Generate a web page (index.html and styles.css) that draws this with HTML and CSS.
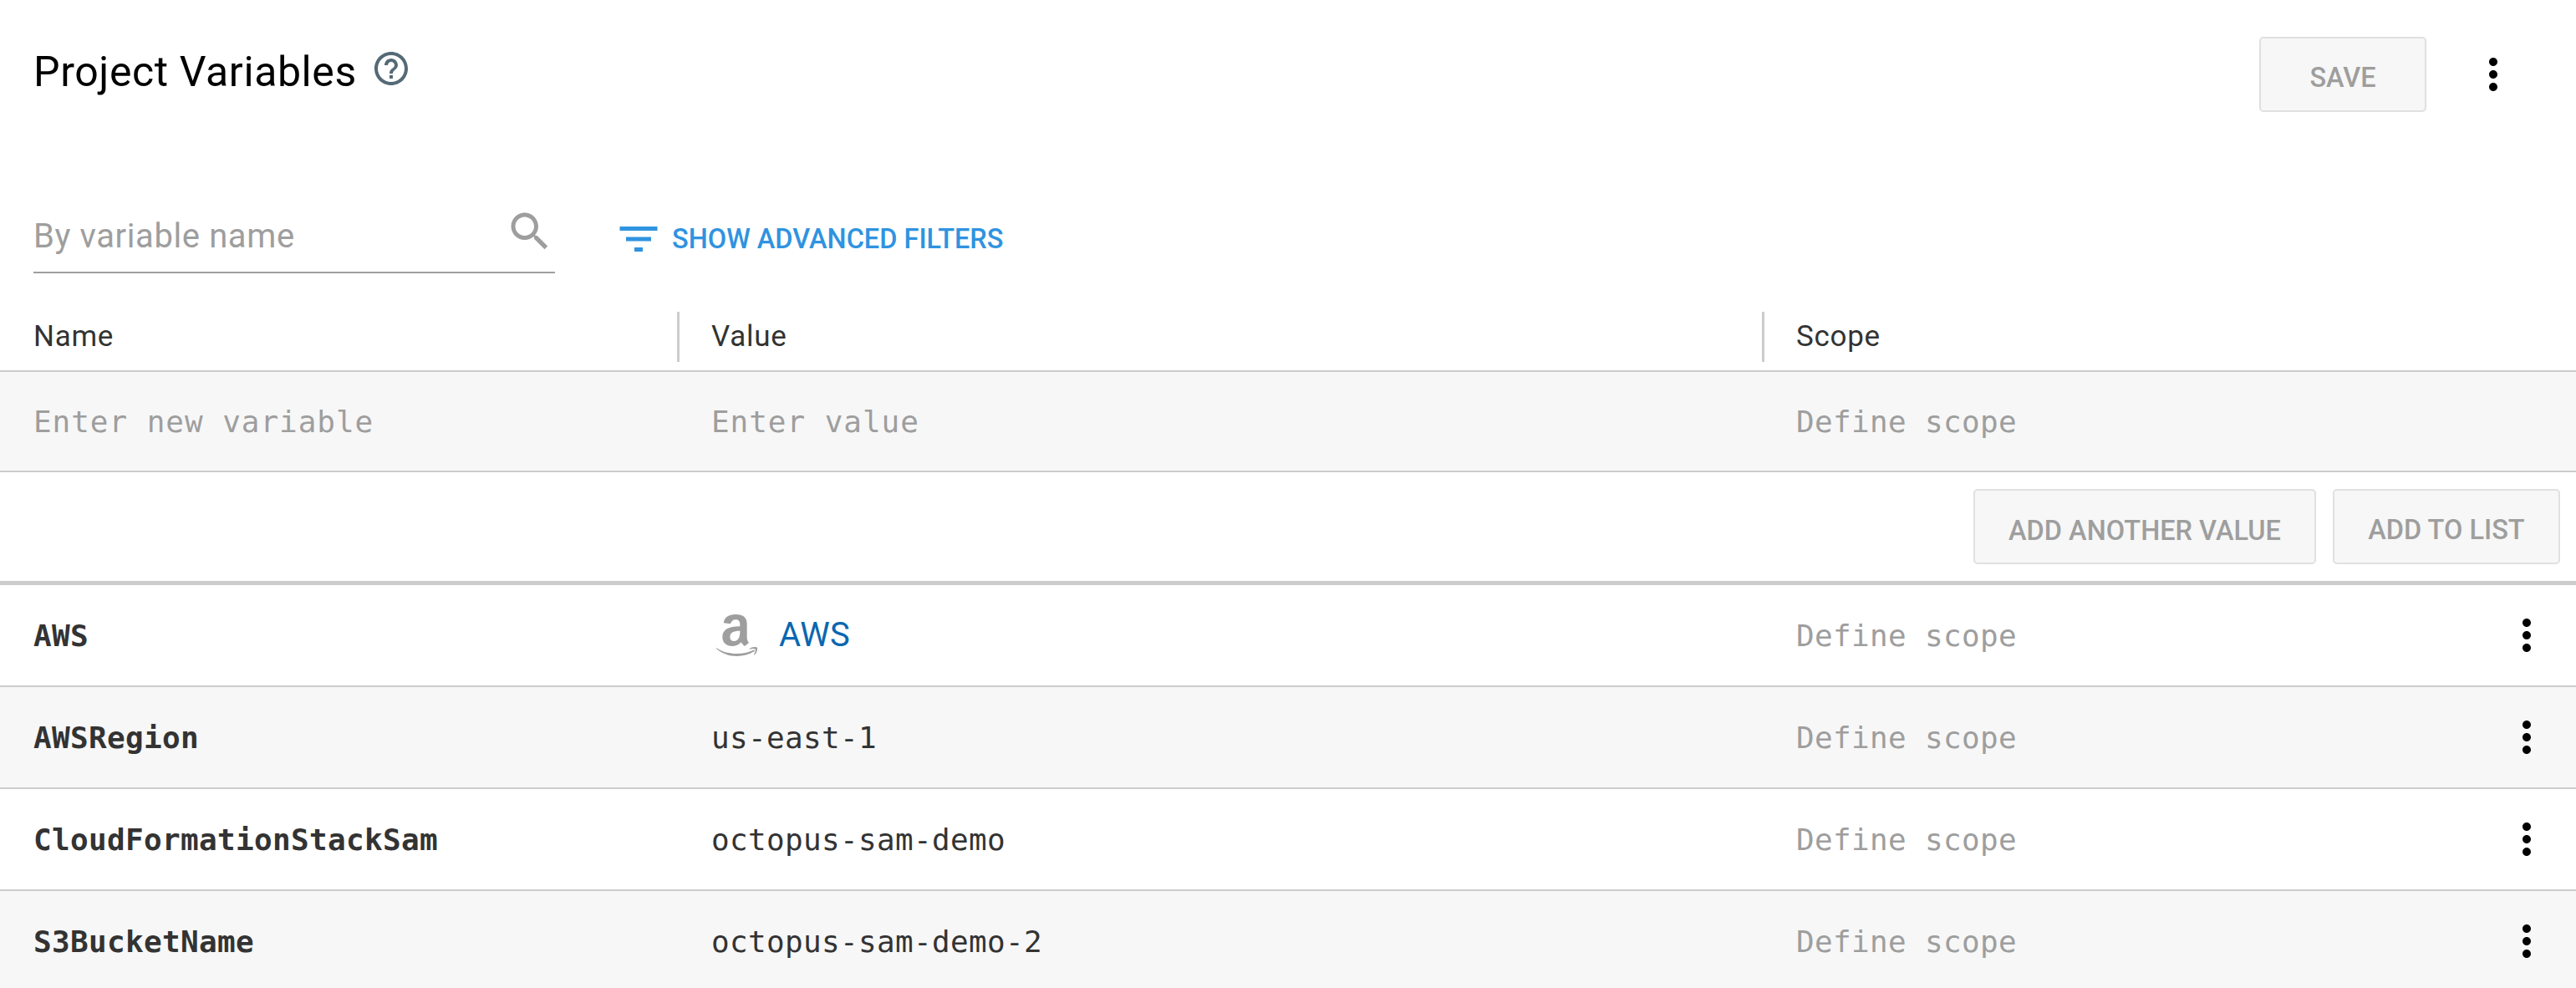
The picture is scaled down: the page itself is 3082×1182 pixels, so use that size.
FILE: index.html
```html
<!DOCTYPE html>
<html lang="en">
<head>
<meta charset="utf-8">
<title>Project Variables</title>
<link rel="stylesheet" href="styles.css">
</head>
<body>
<svg class="symbols" aria-hidden="true">
  <symbol id="more" viewBox="0 0 24 24"><path d="M12 8c1.1 0 2-.9 2-2s-.9-2-2-2-2 .9-2 2 .9 2 2 2zm0 2c-1.1 0-2 .9-2 2s.9 2 2 2 2-.9 2-2-.9-2-2-2zm0 6c-1.1 0-2 .9-2 2s.9 2 2 2 2-.9 2-2-.9-2-2-2z"/></symbol>
</svg>
<header class="page-header">
  <h1 class="title">Project Variables</h1>
  <svg class="help" viewBox="0 0 24 24"><path d="M11 18h2v-2h-2v2zm1-16C6.48 2 2 6.48 2 12s4.480 10 10 10 10-4.480 10-10S17.520 2 12 2zm0 18c-4.410 0-8-3.590-8-8s3.590-8 8-8 8 3.590 8 8-3.590 8-8 8zm0-14c-2.210 0-4 1.790-4 4h2c0-1.100.9-2 2-2s2 .9 2 2c0 2-3 1.750-3 5h2c0-2.250 3-2.500 3-5 0-2.210-1.790-4-4-4z"/></svg>
  <button class="button save">Save</button>
  <svg class="icon menu"><use href="#more"/></svg>
</header>
<section class="filters">
  <div class="search">
    <span class="search-label">By variable name</span>
    <svg class="icon search-icon" viewBox="0 0 24 24"><path d="M15.500 14h-.79l-.28-.27C15.410 12.590 16 11.110 16 9.500 16 5.910 13.090 3 9.500 3S3 5.910 3 9.500 5.910 16 9.500 16c1.610 0 3.090-.59 4.230-1.570l.27.28v.79l5 4.990L20.490 19l-4.990-5zm-6 0C7.010 14 5 11.990 5 9.500S7.010 5 9.500 5 14 7.010 14 9.500 11.990 14 9.500 14z"/></svg>
  </div>
  <a class="advanced">
    <svg class="icon" viewBox="0 0 24 24"><path d="M10 18h4v-2h-4v2zM3 6v2h18V6H3zm3 7h12v-2H6v2z"/></svg>
    <span>Show advanced filters</span>
  </a>
</section>
<main>
  <div class="head">
    <div class="head-cell">Name</div>
    <div class="head-cell">Value</div>
    <div class="head-cell">Scope</div>
  </div>
  <div class="row entry">
    <div class="cell hint field">Enter new variable</div>
    <div class="cell hint field">Enter value</div>
    <div class="cell hint">Define scope</div>
  </div>
  <div class="actions">
    <button class="button another">Add another value</button>
    <button class="button add">Add to list</button>
  </div>
  <div class="row">
    <div class="cell name">AWS</div>
    <div class="cell account">
      <svg class="aws" viewBox="51 45 150 150"><path fill-rule="evenodd" d="M77 76C80 55 96 45 120 45C147 45 161 56 161 79V126C161 138 164 142 168 147L153 159C147 155 144 151 140 145C131 155 121 159 108 159C87 159 73 146 73 126C73 99 96 89 136 88V81C136 70 131 64 120 64C110 64 105 70 102 79ZM136 104C112 104 100 111 100 126C100 136 106 141 114 141C129 141 137 128 136 104Z"/><path d="M51 165C73 180 97 186 124 186C147 186 168 181 184 173C188 171 191 175 187 178C169 190 148 195 125 195C96 195 70 185 51 168Z"/><path d="M170 168C178 161 193 160 198 164C200 170 196 184 187 191L186 189C190 180 193 173 191 170C188 167 180 168 171 170Z"/></svg>
      <a class="link">AWS</a>
    </div>
    <div class="cell hint">Define scope</div>
    <svg class="icon menu"><use href="#more"/></svg>
  </div>
  <div class="row shaded">
    <div class="cell name">AWSRegion</div>
    <div class="cell">us-east-1</div>
    <div class="cell hint">Define scope</div>
    <svg class="icon menu"><use href="#more"/></svg>
  </div>
  <div class="row">
    <div class="cell name">CloudFormationStackSam</div>
    <div class="cell">octopus-sam-demo</div>
    <div class="cell hint">Define scope</div>
    <svg class="icon menu"><use href="#more"/></svg>
  </div>
  <div class="row shaded">
    <div class="cell name">S3BucketName</div>
    <div class="cell">octopus-sam-demo-2</div>
    <div class="cell hint">Define scope</div>
    <svg class="icon menu"><use href="#more"/></svg>
  </div>
</main>
</body>
</html>
```
FILE: styles.css
```css
* { box-sizing: border-box; }
html { height: 100%; overflow: hidden; }
body {
  margin: 0;
  height: 1182px;
  overflow: hidden;
  background: #fff;
  color: #333;
  font-family: Roboto, sans-serif;
  font-size: 35px;
}
.symbols { display: none; }
.icon { width: 60px; height: 60px; flex: none; fill: currentColor; }
.menu { color: #000; }

.page-header {
  display: flex;
  align-items: center;
  height: 178px;
  padding: 0 69px 0 40px;
}
.title {
  margin: -6px 0 0;
  font-size: 50px;
  font-weight: 400;
  line-height: 60px;
  letter-spacing: .6px;
  color: #000;
}
.help { width: 48px; height: 48px; margin: -14px 0 0 17px; fill: #546a76; }
.save { width: 200px; margin: 0 50px 0 auto; }

.button {
  height: 90px;
  padding: 9px 0 0;
  border: 2px solid #e0e0e0;
  border-radius: 5px;
  background: #f7f7f7;
  color: #9e9e9e;
  font: 500 32.5px/41px Roboto, sans-serif;
  text-transform: uppercase;
  white-space: nowrap;
}

.filters {
  display: flex;
  align-items: flex-end;
  gap: 70px;
  height: 149px;
  margin-bottom: 46px;
  padding-left: 40px;
}
.search {
  display: flex;
  justify-content: space-between;
  width: 624px;
  height: 80px;
  border-bottom: 2px solid #9e9e9e;
  color: #9e9e9e;
}
.search-label { font-size: 40px; line-height: 72px; letter-spacing: .6px; }
.advanced {
  display: flex;
  align-items: center;
  gap: 10px;
  height: 60px;
  margin-bottom: 11px;
  color: #2f93e0;
  font-size: 32.5px;
  font-weight: 500;
  text-transform: uppercase;
}

.head, .row { display: grid; grid-template-columns: 810px 1298px 1fr 89px; }
.head { height: 72px; padding-bottom: 10px; border-bottom: 2px solid #ccc; }
.head-cell { padding-left: 40px; line-height: 60px; letter-spacing: .7px; }
.head-cell + .head-cell { padding-left: 38px; border-left: 3px solid #ccc; }

.row {
  align-items: center;
  height: 122px;
  border-bottom: 2px solid #ccc;
  font: 36px/60px "DejaVu Sans Mono", monospace;
  letter-spacing: .33px;
}
.entry { height: 120px; background: #f7f7f7; }
.shaded { background: #f7f7f7; }
.cell { padding: 2px 0 0 41px; }
.cell:first-child { padding-left: 40px; }
.name { font-weight: 700; }
.hint { color: #9e9e9e; }
.field { letter-spacing: .95px; }
.account { display: flex; align-items: center; padding: 0 0 0 47px; }
.aws { width: 50px; height: 50px; margin-right: 25px; fill: #9e9e9e; }
.link { color: #0a67b1; font: 40px/60px Roboto, sans-serif; letter-spacing: .4px; }

.actions {
  display: flex;
  justify-content: flex-end;
  gap: 20px;
  height: 135px;
  padding: 20px 19px 0 0;
  border-bottom: 5px solid #ccc;
}
.another { width: 410px; padding-top: 11px; }
.add { width: 272px; }
```
